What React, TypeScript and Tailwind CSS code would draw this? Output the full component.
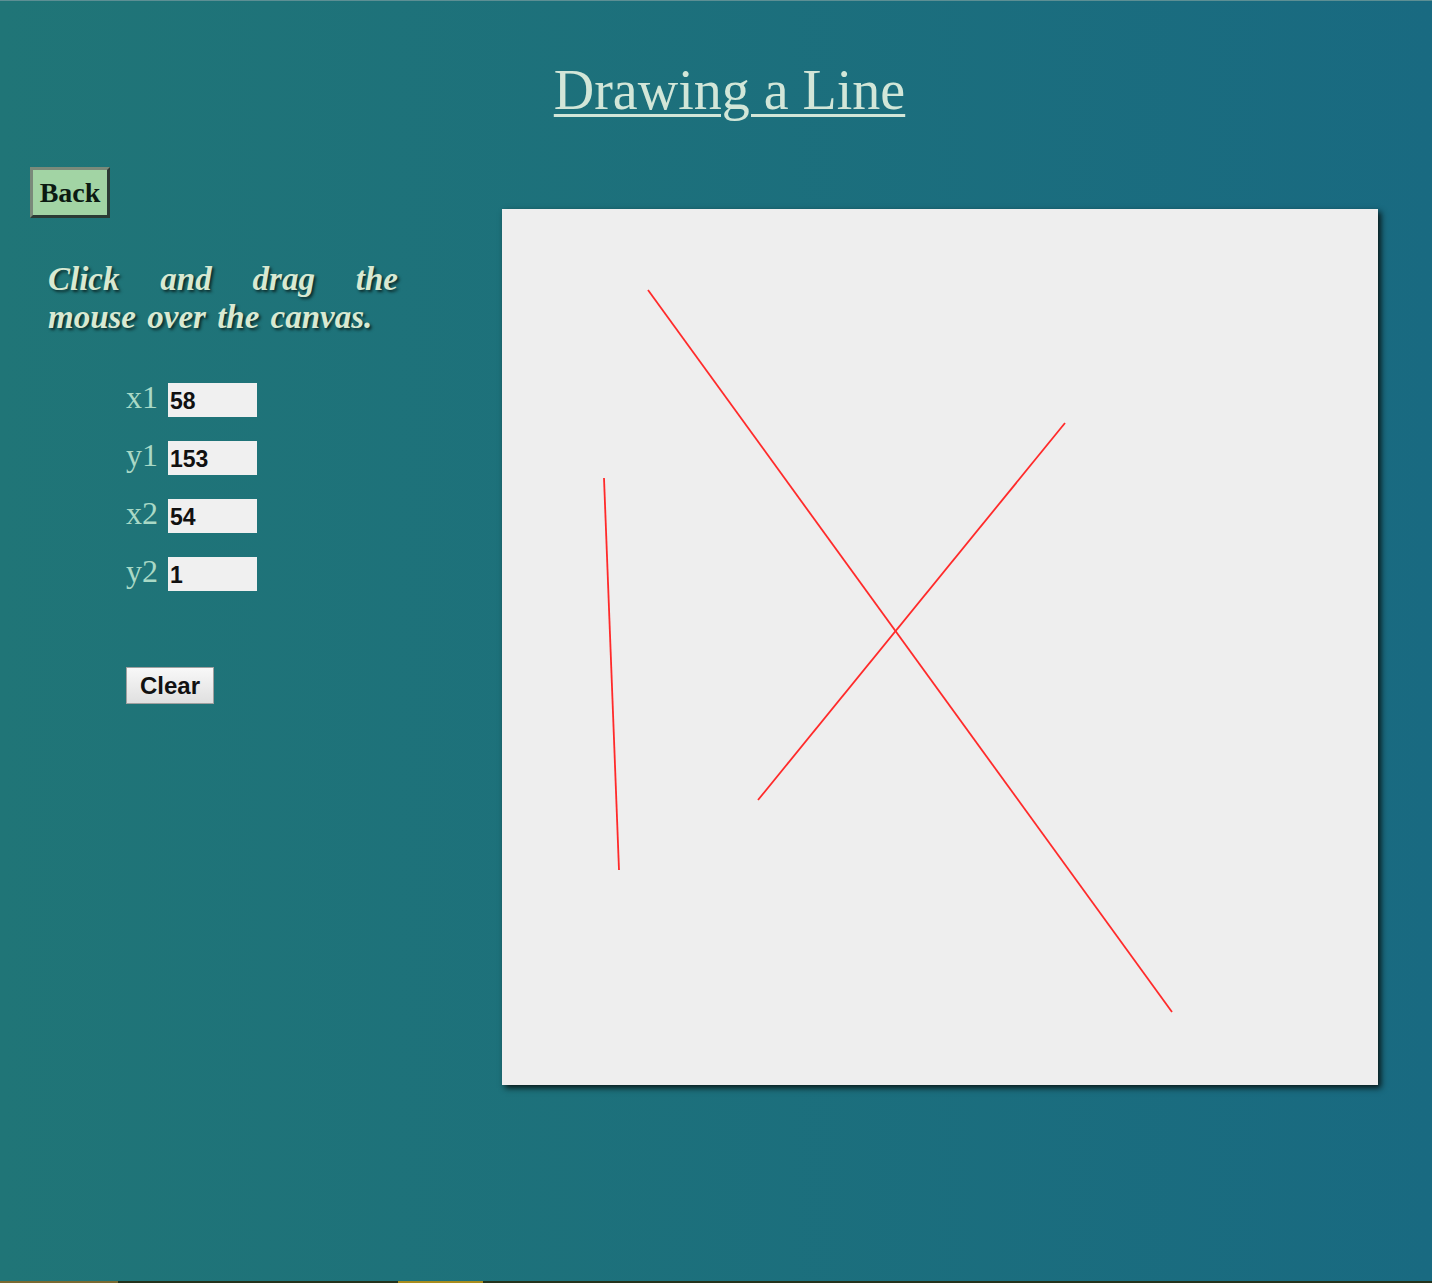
import React, { useState } from "react";

const lines = [
  { x1: 146, y1: 81, x2: 670, y2: 803 },
  { x1: 563, y1: 214, x2: 256, y2: 591 },
  { x1: 102, y1: 269, x2: 117, y2: 661 },
];

const CoordField: React.FC<{ label: string; value: string }> = ({ label, value }) => {
  return (
    <div className="flex items-center h-[34px]">
      <span className="w-[42px] text-[32px] leading-none text-[#a9d9c6] font-['Liberation_Serif',serif] -mt-[6px]">
        {label}
      </span>
      <input
        readOnly
        value={value}
        className="w-[89px] h-[34px] bg-[#f0f0f0] pl-[2px] pt-[3px] text-[23px] font-bold text-[#111] font-['Liberation_Sans',Arial,sans-serif] outline-none"
      />
    </div>
  );
};

export default function App() {
  const [coords] = useState({ x1: "58", y1: "153", x2: "54", y2: "1" });

  return (
    <div className="w-[1432px] h-[1283px] flex flex-col bg-gradient-to-r from-[#207577] to-[#196a81] border-t border-[#5d8f94] font-['Liberation_Serif',serif]">
      <h1 className="text-center pt-[55px] pl-[27px] text-[56px] leading-[68px] text-[#d2e6d8] underline decoration-[3px] underline-offset-[5px]">
        Drawing a Line
      </h1>

      <div className="flex flex-1 pt-[43px] pl-[30px]">
        {/* left panel */}
        <div className="w-[472px] flex flex-col">
          <button className="self-start w-[80px] h-[51px] bg-[#a2d4a4] border-[3px] border-t-[#7a8a7a] border-l-[#7a8a7a] border-r-[#2b3b35] border-b-[#2b3b35] text-[28px] font-bold text-[#0c1a12]">
            Back
          </button>

          <p className="w-[350px] ml-[18px] mt-[42px] text-[33px] leading-[38px] font-bold italic text-justify [word-spacing:3px] text-[#d8e9d2] [text-shadow:2px_2px_3px_#0b2a2a]">
            Click and drag the mouse over the canvas.
          </p>

          <div className="ml-[96px] mt-[47px] flex flex-col gap-[24px]">
            <CoordField label="x1" value={coords.x1} />
            <CoordField label="y1" value={coords.y1} />
            <CoordField label="x2" value={coords.x2} />
            <CoordField label="y2" value={coords.y2} />
          </div>

          <button className="ml-[96px] mt-[76px] self-start w-[88px] h-[37px] bg-gradient-to-b from-[#f8f8f8] to-[#e0e0e0] border border-[#a0a0a0] text-[24px] font-bold text-[#111] font-['Liberation_Sans',Arial,sans-serif]">
            Clear
          </button>
        </div>

        {/* canvas */}
        <div className="mt-[42px] w-[876px] h-[876px] bg-[#eeeeee] shadow-[3px_3px_6px_#081818]">
          <svg width="876" height="876" viewBox="0 0 876 876">
            {lines.map((l, i) => (
              <line key={i} x1={l.x1} y1={l.y1} x2={l.x2} y2={l.y2} stroke="#ff2a2a" strokeWidth="1.8" />
            ))}
          </svg>
        </div>
      </div>

      <div className="flex h-[2px]">
        <div className="w-[118px] bg-[#7a6a30]" />
        <div className="w-[280px] bg-[#24331c]" />
        <div className="w-[85px] bg-[#a88c1c]" />
        <div className="flex-1 bg-[#24331c]" />
      </div>
    </div>
  );
}
